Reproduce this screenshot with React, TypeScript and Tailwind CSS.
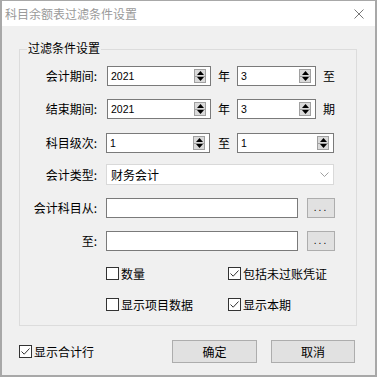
import React from "react";

const FONT = { fontFamily: '"Noto Sans CJK SC", "Noto Sans", sans-serif' };
const NUMFONT = { fontFamily: '"Liberation Sans", Arial, sans-serif' };

function Spinner() {
  return (
    <div className="flex flex-col w-[12px] h-[14px] mr-[4px]">
      <div className="flex-1 flex items-center justify-center bg-[#dadada] border border-[#a0a0a0]">
        <svg width="7" height="4" viewBox="0 0 7 4"><path d="M0 4 L3.5 0 L7 4 Z" fill="#000" /></svg>
      </div>
      <div className="flex-1 flex items-center justify-center bg-[#dadada] border border-t-0 border-[#a0a0a0]">
        <svg width="7" height="4" viewBox="0 0 7 4"><path d="M0 0 L3.5 4 L7 0 Z" fill="#000" /></svg>
      </div>
    </div>
  );
}

function SpinInput({ value, w }: { value: string; w: string }) {
  return (
    <div className={`flex items-center justify-between h-[20px] bg-white border border-[#7a7a7a] ${w}`}>
      <span className="pl-[3px] text-[10.5px] text-black leading-none" style={NUMFONT}>{value}</span>
      <Spinner />
    </div>
  );
}

function Label({ text }: { text: string }) {
  return (
    <div className="w-[80px] pr-[3px] text-right text-[12px] leading-none text-black shrink-0">
      {text}
    </div>
  );
}

function Check({ checked, label }: { checked: boolean; label: string }) {
  return (
    <div className="flex items-center">
      <div className="w-[13px] h-[13px] border border-[#333] bg-white flex items-center justify-center">
        {checked && (
          <svg width="11" height="11" viewBox="0 0 11 11">
            <path d="M1.5 5.5 L4.2 8.2 L9.5 2.5" stroke="#333" strokeWidth="1" fill="none" />
          </svg>
        )}
      </div>
      <span className="ml-[2px] text-[12px] leading-none text-black">{label}</span>
    </div>
  );
}

export default function App() {
  return (
    <div
      className="w-[377px] h-[377px] bg-[#f0f0f0] border-l-2 border-r-2 border-b-2 border-t border-[#a8a8a8] flex flex-col overflow-hidden"
      style={FONT}
    >
      <div className="h-[25px] bg-white flex items-center justify-between shrink-0">
        <span className="pl-[3px] text-[12px] text-[#9a9a9a] leading-none">科目余额表过滤条件设置</span>
        <svg width="10" height="10" viewBox="0 0 10 10" className="mr-[11px]">
          <path d="M0.5 0.5 L9.5 9.5 M9.5 0.5 L0.5 9.5" stroke="#777" strokeWidth="1" />
        </svg>
      </div>

      <div className="pl-[17px] pr-[18px] pt-[23px]">
        <div className="relative border border-[#dcdcdc] pt-[16px] pb-[14px]">
          <span className="absolute left-[7px] top-[-8px] bg-[#f0f0f0] px-[1px] text-[12px] leading-none text-black">
            过滤条件设置
          </span>

          <div className="flex items-center h-[20px]">
            <Label text="会计期间:" />
            <div className="ml-[7px]"><SpinInput value="2021" w="w-[104px]" /></div>
            <span className="ml-[7px] text-[12px] leading-none">年</span>
            <div className="ml-[7px]"><SpinInput value="3" w="w-[79px]" /></div>
            <span className="ml-[7px] text-[12px] leading-none">至</span>
          </div>

          <div className="flex items-center h-[20px] mt-[13px]">
            <Label text="结束期间:" />
            <div className="ml-[7px]"><SpinInput value="2021" w="w-[104px]" /></div>
            <span className="ml-[7px] text-[12px] leading-none">年</span>
            <div className="ml-[7px]"><SpinInput value="3" w="w-[79px]" /></div>
            <span className="ml-[7px] text-[12px] leading-none">期</span>
          </div>

          <div className="flex items-center h-[20px] mt-[14px]">
            <Label text="科目级次:" />
            <div className="ml-[6px]"><SpinInput value="1" w="w-[104px]" /></div>
            <span className="ml-[8px] text-[12px] leading-none">至</span>
            <div className="ml-[7px]"><SpinInput value="1" w="w-[97px]" /></div>
          </div>

          <div className="flex items-center h-[21px] mt-[11px]">
            <Label text="会计类型:" />
            <div className="ml-[6px] w-[228px] h-[21px] bg-white border border-[#d9d9d9] flex items-center justify-between">
              <span className="pl-[4px] text-[12px] leading-none text-black">财务会计</span>
              <svg width="9" height="6" viewBox="0 0 9 6" className="mr-[4px]">
                <path d="M0.5 0.5 L4.5 4.5 L8.5 0.5" stroke="#a0a0a0" strokeWidth="1" fill="none" />
              </svg>
            </div>
          </div>

          <div className="flex items-center h-[20px] mt-[13px]">
            <Label text="会计科目从:" />
            <div className="ml-[6px] w-[192px] h-[20px] bg-white border border-[#7a7a7a]" />
            <div className="ml-[9px] w-[28px] h-[20px] bg-[#e1e1e1] border border-[#adadad] flex items-end justify-center pb-[4px]">
              <span className="text-[10px] leading-none tracking-[2px]" style={NUMFONT}>...</span>
            </div>
          </div>

          <div className="flex items-center h-[20px] mt-[13px]">
            <Label text="至:" />
            <div className="ml-[6px] w-[192px] h-[20px] bg-white border border-[#7a7a7a]" />
            <div className="ml-[9px] w-[28px] h-[20px] bg-[#e1e1e1] border border-[#adadad] flex items-end justify-center pb-[4px]">
              <span className="text-[10px] leading-none tracking-[2px]" style={NUMFONT}>...</span>
            </div>
          </div>

          <div className="flex items-center h-[13px] mt-[16px] pl-[86px]">
            <div className="w-[122px]"><Check checked={false} label="数量" /></div>
            <Check checked={true} label="包括未过账凭证" />
          </div>

          <div className="flex items-center h-[13px] mt-[18px] pl-[86px]">
            <div className="w-[122px]"><Check checked={false} label="显示项目数据" /></div>
            <Check checked={true} label="显示本期" />
          </div>
        </div>

        <div className="flex items-center mt-[14px] h-[23px]">
          <div className="w-[153px]"><Check checked={true} label="显示合计行" /></div>
          <div className="w-[85px] h-[23px] bg-[#e1e1e1] border border-[#adadad] flex items-center justify-center text-[12px] leading-none">确定</div>
          <div className="ml-[14px] w-[84px] h-[23px] bg-[#e1e1e1] border border-[#adadad] flex items-center justify-center text-[12px] leading-none">取消</div>
        </div>
      </div>
    </div>
  );
}
